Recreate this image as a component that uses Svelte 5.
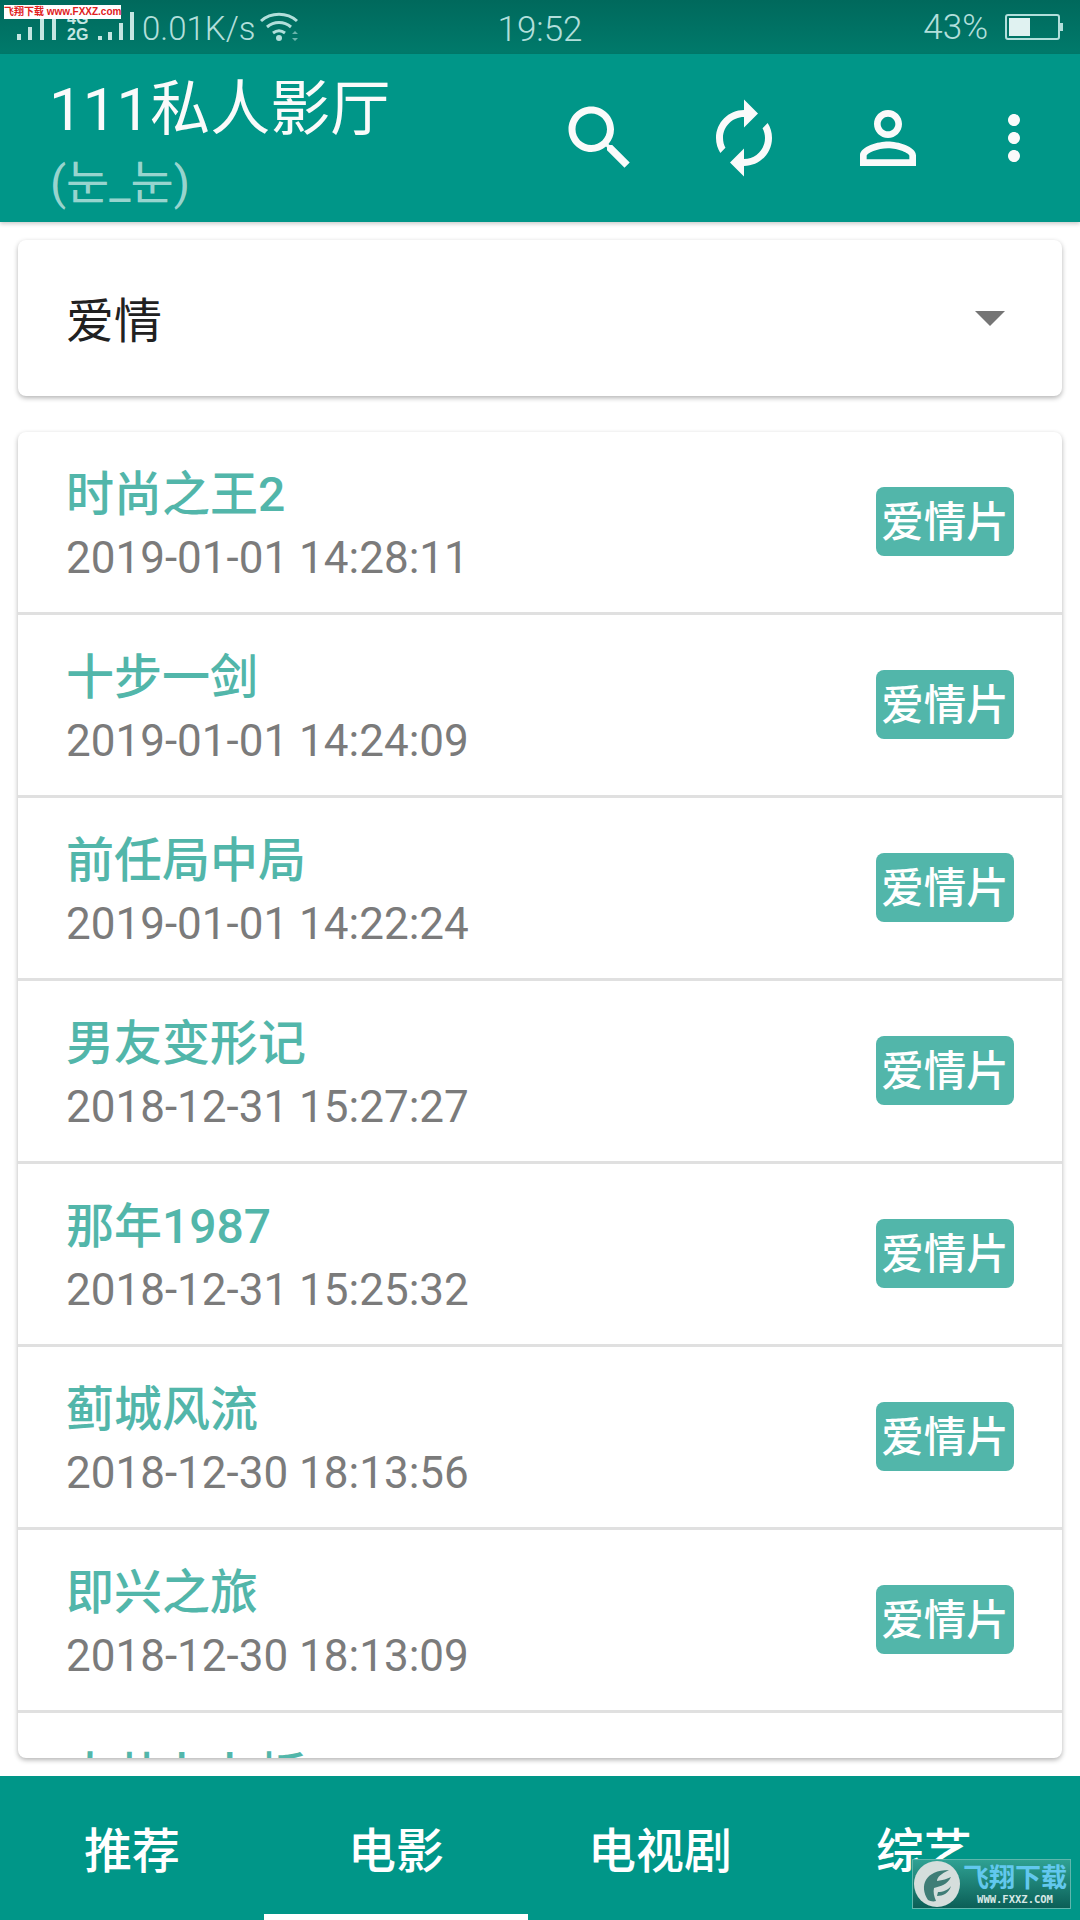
<script>
	const movies = [
		{ title: '时尚之王2', time: '2019-01-01 14:28:11' },
		{ title: '十步一剑', time: '2019-01-01 14:24:09' },
		{ title: '前任局中局', time: '2019-01-01 14:22:24' },
		{ title: '男友变形记', time: '2018-12-31 15:27:27' },
		{ title: '那年1987', time: '2018-12-31 15:25:32' },
		{ title: '蓟城风流', time: '2018-12-30 18:13:56' },
		{ title: '即兴之旅', time: '2018-12-30 18:13:09' },
		{ title: '大共卜卜板', time: '2018-12-30 18:12:40' }
	];
	const tabs = ['推荐', '电影', '电视剧', '综艺'];
	let active = 1;
</script>

<div class="page">
	<div class="status">
		<div class="status-left">
			<div class="signal">
				<span class="net one">2G</span>
				<svg width="44" height="30" viewBox="0 0 44 30" fill="currentColor">
					<rect x="0" y="23" width="4" height="6" />
					<rect x="11" y="16" width="4" height="13" />
					<rect x="23" y="8" width="4" height="21" />
					<rect x="35" y="2" width="4" height="27" />
				</svg>
			</div>
			<div class="signal second">
				<span class="net two">4G<br />2G</span>
				<svg width="40" height="30" viewBox="0 0 40 30" fill="currentColor">
					<rect x="1" y="25" width="4" height="4" />
					<rect x="11" y="21" width="4" height="8" />
					<rect x="22" y="12" width="4" height="17" />
					<rect x="33" y="1" width="4" height="28" />
				</svg>
			</div>
			<span class="speed">0.01K/s</span>
			<svg class="wifi" width="42" height="32" viewBox="0 0 42 32" fill="none" stroke="currentColor" stroke-width="3">
				<path d="M1 10C11 1 27 1 37 10" />
				<path d="M7 16C14 10 24 10 31 16" />
				<path d="M13 22C17 19 21 19 25 22" />
				<circle cx="19" cy="27" r="3" fill="currentColor" stroke="none" />
				<path d="M32 23l3-3 3 3zM32 27l3 3 3-3z" fill="currentColor" stroke="none" opacity="0.6" />
			</svg>
		</div>
		<span class="clock">19:52</span>
		<div class="status-right">
			<span class="percent">43%</span>
			<div class="battery"><div class="level"></div></div>
			<div class="tip"></div>
		</div>
		<div class="site-mark">飞翔下载 www.FXXZ.com</div>
	</div>

	<header class="toolbar">
		<div class="titles">
			<div class="app-title">111私人影厅</div>
			<div class="app-sub">(눈_눈)</div>
		</div>
		<svg class="icon search" width="84" height="84" viewBox="0 0 24 24" fill="#fafafa">
			<path d="M15.5 14h-.79l-.28-.27C15.41 12.59 16 11.11 16 9.5 16 5.91 13.09 3 9.5 3S3 5.91 3 9.5 5.91 16 9.5 16c1.61 0 3.09-.59 4.23-1.57l.27.28v.79l5 4.99L20.49 19l-4.99-5zm-6 0C7.01 14 5 11.99 5 9.5S7.01 5 9.5 5 14 7.01 14 9.5 11.99 14 9.5 14z" />
		</svg>
		<svg class="icon sync" width="84" height="84" viewBox="0 0 24 24" fill="#fafafa">
			<path d="M12 4V1L8 5l4 4V6c3.31 0 6 2.69 6 6 0 1.01-.25 1.97-.7 2.8l1.46 1.46C19.54 15.03 20 13.57 20 12c0-4.42-3.58-8-8-8zm0 14c-3.31 0-6-2.69-6-6 0-1.01.25-1.97.7-2.8L5.24 7.74C4.46 8.97 4 10.43 4 12c0 4.42 3.58 8 8 8v3l4-4-4-4v3z" transform="matrix(-1 0 0 1 24 0)" />
		</svg>
		<svg class="icon person" width="84" height="84" viewBox="0 0 24 24" fill="#fafafa">
			<path d="M12 5.9c1.16 0 2.1.94 2.1 2.1s-.94 2.1-2.1 2.1S9.9 9.16 9.9 8s.94-2.1 2.1-2.1m0 9c2.97 0 6.1 1.46 6.1 2.1v1.1H5.9V17c0-.64 3.13-2.1 6.1-2.1M12 4C9.79 4 8 5.79 8 8s1.79 4 4 4 4-1.79 4-4-1.79-4-4-4zm0 9c-2.67 0-8 1.34-8 4v3h16v-3c0-2.66-5.33-4-8-4z" />
		</svg>
		<svg class="icon more" width="72" height="72" viewBox="0 0 24 24" fill="#fafafa">
			<path d="M12 8c1.1 0 2-.9 2-2s-.9-2-2-2-2 .9-2 2 .9 2 2 2zm0 2c-1.1 0-2 .9-2 2s.9 2 2 2 2-.9 2-2-.9-2-2-2zm0 6c-1.1 0-2 .9-2 2s.9 2 2 2 2-.9 2-2-.9-2-2-2z" />
		</svg>
	</header>

	<div class="card select">
		<span>爱情</span>
		<div class="arrow"></div>
	</div>

	<div class="card list">
		{#each movies as movie}
			<div class="row">
				<div class="info">
					<div class="title">{movie.title}</div>
					<div class="time">{movie.time}</div>
				</div>
				<span class="badge">爱情片</span>
			</div>
		{/each}
	</div>

	<nav class="tabs">
		{#each tabs as tab, i}
			<div class="tab" class:active={i === active}>{tab}</div>
		{/each}
		<div class="fx-mark">
			<svg width="48" height="48" viewBox="0 0 48 48">
				<circle cx="24" cy="24" r="23" fill="#d5dedc" />
				<path d="M15 40C6 26 12 10 36 10C28 14 24 17 24 21C30 20 34 19 38 17C34 25 28 26 21 28C20 32 21 36 23 41C20 42 17 41 15 40Z" fill="#3f7d76" />
				<path d="M25 32C30 32 35 30 38 26C36 33 30 36 24 36Z" fill="#3f7d76" />
			</svg>
			<div class="fx-text">
				<div class="fx-cn">飞翔下载</div>
				<div class="fx-en">WWW.FXXZ.COM</div>
			</div>
		</div>
	</nav>
</div>

<style>
	:global(body) {
		background: #fff;
	}

	.page {
		width: 1080px;
		height: 1920px;
		display: flex;
		flex-direction: column;
		overflow: hidden;
		font-family: Roboto, "Noto Sans CJK SC", sans-serif;
	}

	.status {
		position: relative;
		height: 54px;
		flex: none;
		display: flex;
		align-items: center;
		justify-content: space-between;
		padding: 0 17px 0 17px;
		background: linear-gradient(#00695c, #007a6b);
		color: #b2dfdb;
		font-weight: 300;
		font-size: 33px;
	}

	.status-left {
		display: flex;
		align-items: center;
		width: 300px;
	}

	.signal {
		position: relative;
		width: 50px;
		height: 30px;
		color: #c4e6e2;
	}

	.signal svg {
		position: absolute;
		left: 0;
		top: -1px;
	}

	.second {
		width: 75px;
	}

	.second svg {
		left: 30px;
	}

	.net {
		font-family: "Liberation Sans", sans-serif;
		font-weight: 700;
		position: absolute;
		color: #c4e6e2;
	}

	.one {
		left: 0;
		top: -7px;
		font-size: 14px;
		line-height: 12px;
	}

	.two {
		left: 0;
		top: -1px;
		font-size: 16px;
		line-height: 16px;
	}

	.speed {
		margin-top: 2px;
		white-space: nowrap;
	}

	.wifi {
		margin-left: 4px;
		flex: none;
	}

	.clock {
		position: absolute;
		left: 0;
		right: 0;
		text-align: center;
		margin-top: 4px;
		font-size: 35px;
	}

	.status-right {
		display: flex;
		align-items: center;
	}

	.percent {
		margin-right: 17px;
		font-size: 35px;
	}

	.battery {
		width: 55px;
		height: 26px;
		box-sizing: border-box;
		border: 2px solid #b2dfdb;
		border-radius: 3px;
		padding: 2px;
	}

	.level {
		width: 21px;
		height: 100%;
		background: #e0f2f1;
	}

	.tip {
		width: 3px;
		height: 8px;
		background: #b2dfdb;
	}

	.site-mark {
		position: absolute;
		left: 4px;
		top: 5px;
		width: 117px;
		height: 14px;
		background: #fff;
		color: #e0201c;
		font-family: "Liberation Sans", "Noto Sans CJK SC", sans-serif;
		font-size: 10px;
		font-weight: 700;
		line-height: 14px;
		text-align: center;
		white-space: nowrap;
	}

	.toolbar {
		height: 168px;
		flex: none;
		display: flex;
		align-items: center;
		box-sizing: border-box;
		padding-left: 49px;
		background: #009688;
		box-shadow: 0 2px 4px rgba(0, 0, 0, 0.2);
		position: relative;
	}

	.titles {
		width: 508.5px;
		flex: none;
		padding-top: 18px;
	}

	.app-title {
		color: #fafafa;
		font-size: 60px;
		line-height: 70px;
		margin-top: -8px;
	}

	.app-sub {
		color: rgba(255, 255, 255, 0.62);
		font-family: Roboto, "Noto Sans CJK KR", sans-serif;
		font-size: 47px;
		line-height: 56px;
		margin-top: 10px;
		margin-left: 1px;
	}

	.icon {
		flex: none;
	}

	.sync {
		margin-left: 60px;
	}

	.person {
		margin-left: 60px;
	}

	.more {
		margin-left: 48px;
	}

	.card {
		background: #fff;
		margin: 0 18px;
		border-radius: 8px;
		box-shadow: 0 2px 5px rgba(0, 0, 0, 0.3);
		flex: none;
	}

	.select {
		margin-top: 18px;
		height: 156px;
		box-sizing: border-box;
		padding: 0 57px 2px 48px;
		display: flex;
		align-items: center;
		justify-content: space-between;
		font-size: 48px;
		color: #212121;
	}

	.arrow {
		width: 0;
		height: 0;
		margin-top: 2px;
		border-left: 15px solid transparent;
		border-right: 15px solid transparent;
		border-top: 15px solid #757575;
	}

	.list {
		margin-top: 36px;
		height: 1326px;
		overflow: hidden;
	}

	.row {
		height: 183px;
		box-sizing: border-box;
		border-bottom: 3px solid #e0e0e0;
		padding: 0 48px 0 48px;
		display: flex;
		align-items: center;
		justify-content: space-between;
	}

	.info {
		padding-top: 3px;
	}

	.title {
		color: #52b6aa;
		font-size: 48px;
		font-weight: 500;
		line-height: 62px;
	}

	.time {
		color: #7b7b7b;
		font-size: 44px;
		line-height: 50px;
		margin-top: 7px;
	}

	.badge {
		width: 138px;
		height: 69px;
		margin-top: -1px;
		border-radius: 8px;
		background: #52b6aa;
		color: #fff;
		font-size: 42.5px;
		font-weight: 500;
		line-height: 71px;
		text-align: center;
		overflow: hidden;
	}

	.tabs {
		position: relative;
		margin-top: 18px;
		height: 144px;
		flex: none;
		display: flex;
		background: #009688;
	}

	.tab {
		width: 264px;
		box-sizing: border-box;
		display: flex;
		align-items: center;
		justify-content: center;
		padding-bottom: 2px;
		color: #fff;
		font-size: 48px;
		font-weight: 500;
	}

	.tab.active {
		box-shadow: inset 0 -6px 0 #fff;
	}

	.fx-mark {
		position: absolute;
		left: 913px;
		top: 84px;
		width: 157px;
		height: 48px;
		box-sizing: border-box;
		display: flex;
		align-items: center;
		background: linear-gradient(#2fa193, #0b5f57);
		outline: 1px solid #5fb7ad;
	}

	.fx-mark svg {
		flex: none;
	}

	.fx-text {
		margin-left: 2px;
		text-align: center;
	}

	.fx-cn {
		color: #62c8ee;
		font-size: 26px;
		font-weight: 700;
		line-height: 30px;
		white-space: nowrap;
	}

	.fx-en {
		color: #d8e8e6;
		font-family: "DejaVu Sans Mono", monospace;
		font-size: 10.5px;
		font-weight: 700;
		line-height: 12px;
		white-space: nowrap;
	}
</style>
